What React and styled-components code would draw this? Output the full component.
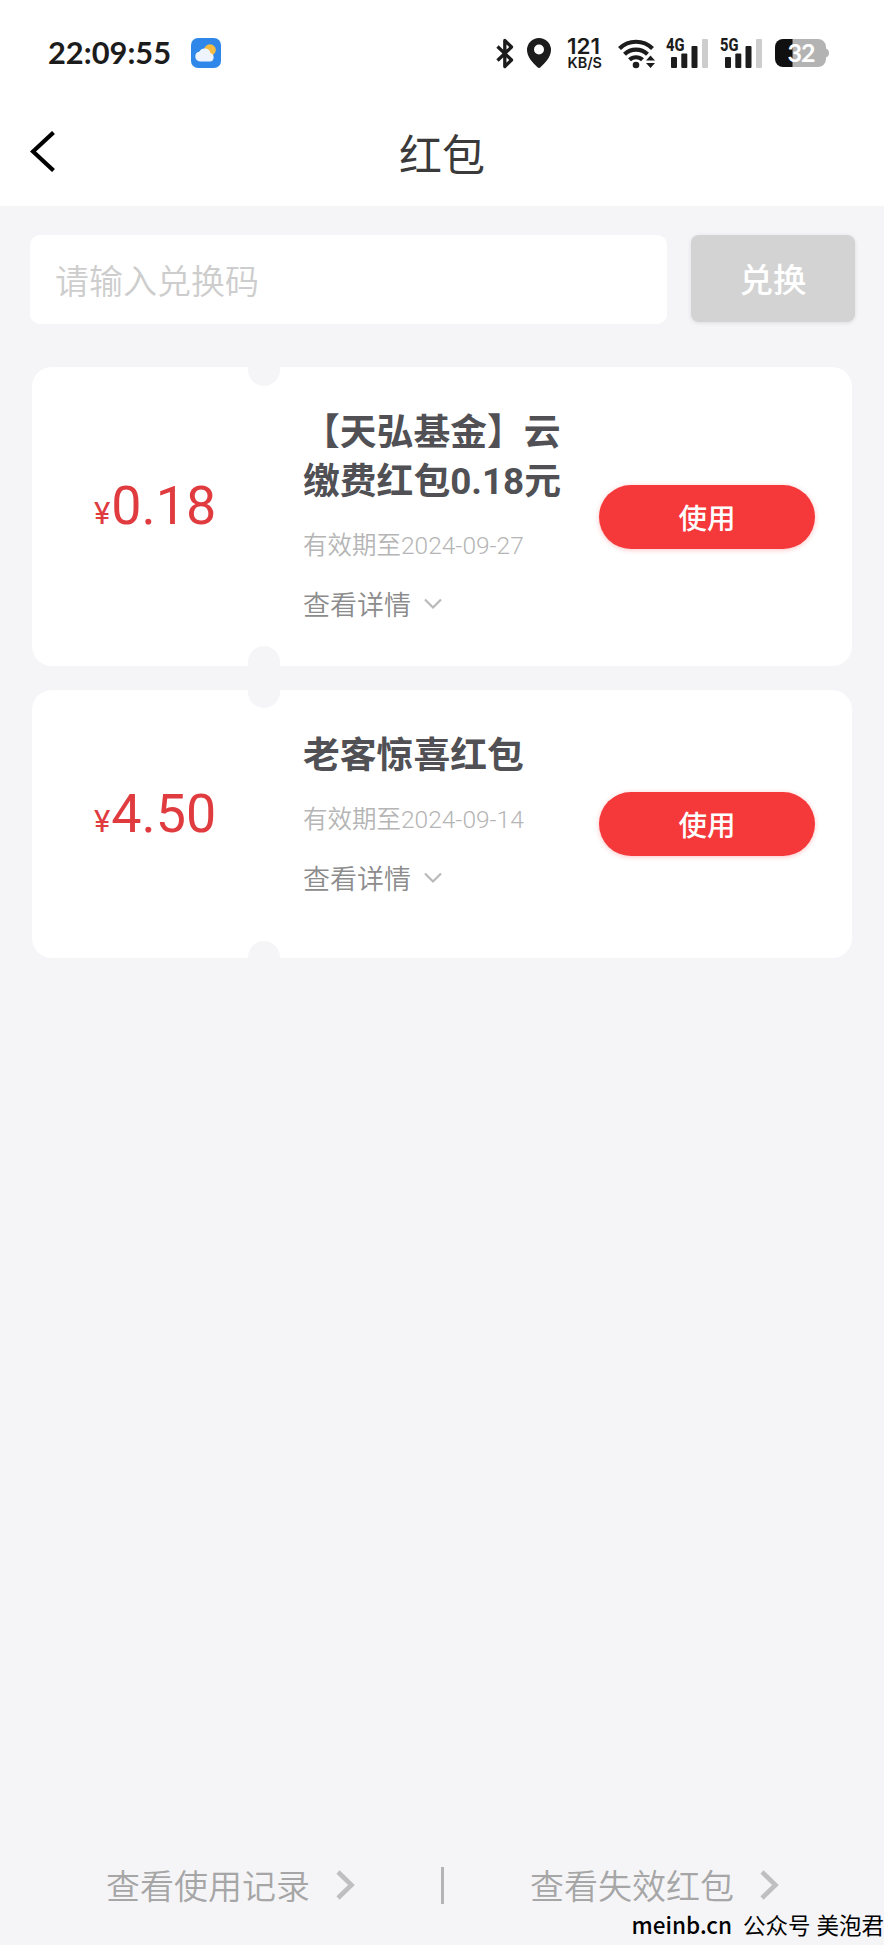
import React, { useState } from "react";
import styled, { createGlobalStyle } from "styled-components";

const GlobalStyle = createGlobalStyle`
  body {
    margin: 0;
    background: #f5f5f8;
  }
`;

const cjk = `"Noto Sans CJK SC", sans-serif`;
const mixed = `Roboto, "Noto Sans CJK SC", sans-serif`;

const Page = styled.div`
  position: relative;
  display: flex;
  flex-direction: column;
  width: 884px;
  height: 1945px;
  overflow: hidden;
  background: #f5f5f8;
  font-family: ${mixed};
`;

const StatusBar = styled.div`
  display: flex;
  align-items: center;
  box-sizing: border-box;
  height: 106px;
  padding: 0 55px 0 48px;
  background: #fff;
`;

const Clock = styled.span`
  width: 143px;
  font-family: Lato, sans-serif;
  font-weight: 700;
  font-size: 30.8px;
  line-height: 40px;
  color: #1c1c1c;
`;

const StatusIcons = styled.div`
  display: flex;
  align-items: center;
  margin-left: auto;

  svg {
    display: block;
    flex: none;
    overflow: visible;
  }
`;

const NavBar = styled.div`
  display: grid;
  grid-template-columns: 100px 1fr 100px;
  align-items: center;
  height: 100px;
  background: #fff;
`;

const BackButton = styled.button`
  display: flex;
  padding: 0 0 9px 30px;
  border: none;
  background: none;
`;

const NavTitle = styled.h1`
  margin: 0;
  font-family: ${cjk};
  font-weight: 400;
  font-size: 43px;
  line-height: 60px;
  text-align: center;
  color: #3a3a3a;
  padding-bottom: 9px;
`;

const RedeemRow = styled.form`
  display: flex;
  gap: 24px;
  padding: 29px 29px 0 30px;
`;

const CodeInput = styled.input`
  flex: 1;
  box-sizing: border-box;
  height: 89px;
  padding: 0 25px;
  border: none;
  border-radius: 10px;
  outline: none;
  background: #fff;
  font-family: ${cjk};
  font-size: 34px;
  color: #333;

  &::placeholder {
    color: #cdcdcd;
    font-weight: 350;
    opacity: 1;
  }
`;

const RedeemButton = styled.button`
  width: 164px;
  height: 87px;
  padding: 0 0 2px;
  border: none;
  border-radius: 8px;
  background: #d3d3d3;
  box-shadow: 0 1px 4px rgba(0, 0, 0, 0.1);
  font-family: ${cjk};
  font-weight: 500;
  font-size: 33.5px;
  color: #fff;
`;

const CouponList = styled.div`
  display: flex;
  flex-direction: column;
  gap: 24px;
  padding: 43px 32px 0;
`;

const Coupon = styled.div`
  position: relative;
  display: grid;
  grid-template-columns: 271px 296px 216px;
  box-sizing: border-box;
  height: ${(props) => props.$height}px;
  border-radius: 20px;
  background: #fff;
`;

const Notch = styled.span`
  position: absolute;
  ${(props) => props.$side}: ${(props) => props.$depth - 32}px;
  left: 216px;
  width: 32px;
  height: 32px;
  border-radius: 50%;
  background: #f5f5f8;
`;

const Price = styled.div`
  align-self: center;
  padding: 0 0 13px 62px;
  font-size: 53.8px;
  line-height: 64px;
  color: #e03c3f;
  white-space: nowrap;

  small {
    margin-right: 1px;
    font-size: 31px;
  }
`;

const Info = styled.div`
  padding-top: 41px;
`;

const CouponTitle = styled.h2`
  margin: 0;
  width: 262px;
  font-size: 36.8px;
  font-weight: 700;
  line-height: 49px;
  color: #505055;
`;

const Expiry = styled.p`
  margin: 22px 0 0;
  font-size: 24.5px;
  font-weight: 350;
  line-height: 36px;
  color: #b5b5b5;
`;

const DetailLink = styled.button`
  display: flex;
  align-items: center;
  gap: 13px;
  margin-top: 20px;
  padding: 0;
  border: none;
  background: none;
  font-family: ${cjk};
  font-weight: 350;
  font-size: 27px;
  line-height: 40px;
  color: #8c8c8c;
`;

const UseButton = styled.button`
  align-self: center;
  height: 64px;
  padding: 0 0 1px;
  border: none;
  border-radius: 32px;
  background: #f5383a;
  box-shadow: 0 1px 5px rgba(245, 56, 58, 0.3);
  font-family: ${cjk};
  font-weight: 500;
  font-size: 28.5px;
  color: #fff;
`;

const Footer = styled.div`
  display: flex;
  align-items: center;
  margin-top: auto;
  padding: 0 0 36px 106px;
`;

const FooterLink = styled.a`
  display: flex;
  align-items: center;
  gap: 26px;
  font-family: ${cjk};
  font-weight: 350;
  font-size: 34px;
  line-height: 48px;
  color: #a6a6a6;

  svg {
    display: block;
  }
`;

const Divider = styled.span`
  width: 3px;
  height: 37px;
  margin: 0 86px;
  background: #b4b4b4;
`;

const Watermark = styled.div`
  position: absolute;
  right: 0;
  bottom: 4px;
  display: flex;
  font-family: ${cjk};
  font-size: 22.5px;
  line-height: 34px;
  color: #000;
  white-space: nowrap;

  b {
    margin-right: 11px;
    font-weight: 500;
  }

  span {
    margin-right: 6px;
  }
`;

const WeatherIcon = () => (
  <svg width="30" height="30" viewBox="0 0 30 30">
    <rect width="30" height="30" rx="7" fill="#2f87ea" />
    <circle cx="19" cy="12" r="5.8" fill="#f7bd43" />
    <path
      d="M9 23.5a5 5 0 0 1-.6-9.900a6 6 0 0 1 11.200 1.700a4.200 4.200 0 0 1-.6 8.200z"
      fill="#eef4fd"
    />
  </svg>
);

const BluetoothIcon = () => (
  <svg width="18" height="31" viewBox="0 0 18 31">
    <path
      d="M1.500 8.500L15.500 22L8.800 28.500V2.500L15.500 9L1.500 22.500"
      fill="none"
      stroke="#1c1c1c"
      strokeWidth="3.300"
      strokeLinejoin="round"
    />
  </svg>
);

const PinIcon = () => (
  <svg width="24" height="30" viewBox="0 0 24 30" style={{ marginLeft: 13 }}>
    <path
      fillRule="evenodd"
      d="M12 0a12 12 0 0 1 12 12c0 7-6 13-10.500 17.300q-1.500 1.200-3 0C6 25 0 19 0 12A12 12 0 0 1 12 0zm0 6.500a5 5 0 1 0 0 10a5 5 0 0 0 0-10z"
      fill="#1c1c1c"
    />
  </svg>
);

const NetSpeed = () => (
  <svg width="36" height="32" viewBox="0 0 36 32" style={{ marginLeft: 16 }}>
    <g fill="#1c1c1c" fontFamily="Inter, sans-serif" fontWeight="600">
      <text x="0" y="17" fontSize="21" textLength="33" lengthAdjust="spacingAndGlyphs">
        121
      </text>
      <text x="0.500" y="31" fontSize="15" textLength="34.500" lengthAdjust="spacingAndGlyphs">
        KB/S
      </text>
    </g>
  </svg>
);

const WifiIcon = () => (
  <svg width="38" height="31" viewBox="0 0 38 31" style={{ marginLeft: 15 }}>
    <g fill="none" stroke="#1c1c1c" strokeWidth="4.200">
      <path d="M1.500 10.500a23.500 23.500 0 0 1 33 0" />
      <path d="M6.500 16.200a16.500 16.500 0 0 1 23 0" />
      <path d="M11.500 21.800a9.500 9.500 0 0 1 13 0" />
    </g>
    <circle cx="18" cy="27" r="3.300" fill="#1c1c1c" />
    <path
      d="M32.500 17.500l4.500 5h-9zM32.500 30l4.500-5h-9z"
      fill="#1c1c1c"
      stroke="#fff"
      strokeWidth="2"
      paintOrder="stroke"
    />
  </svg>
);

const Signal = ({ label, gap }) => (
  <svg width="44" height="32" viewBox="0 0 44 32" style={{ marginLeft: gap }}>
    <g fill="#1c1c1c">
      <rect x="6" y="20" width="6" height="11" rx="1" />
      <rect x="16.300" y="16.500" width="6" height="14.500" rx="1" />
      <rect x="26.500" y="9" width="6" height="22" rx="1" />
    </g>
    <rect x="37" y="2" width="6" height="29" rx="1" fill="#cdcdcd" />
    <text
      x="1"
      y="14"
      fontFamily="Roboto, sans-serif"
      fontSize="17.500"
      fontWeight="800"
      textLength="18.500"
      lengthAdjust="spacingAndGlyphs"
      fill="#1c1c1c"
      stroke="#fff"
      strokeWidth="2"
      paintOrder="stroke"
    >
      {label}
    </text>
  </svg>
);

const Battery = () => (
  <svg width="54" height="28" viewBox="0 0 54 28" style={{ marginLeft: 12 }}>
    <path
      d="M9 0H43a8 8 0 0 1 8 8v1.500q3 1 3 4.500t-3 4.500v1.500a8 8 0 0 1-8 8H9z"
      fill="#b3b3b3"
    />
    <path d="M8 0H17.500V28H8a8 8 0 0 1-8-8V8a8 8 0 0 1 8-8z" fill="#101010" />
    <text
      x="12.500"
      y="23"
      fontFamily="Lato, sans-serif"
      fontSize="25"
      fontWeight="700"
      textLength="28"
      fill="#fff"
    >
      32
    </text>
  </svg>
);

const BackIcon = () => (
  <svg width="26" height="41" viewBox="0 0 26 41">
    <path d="M23.500 1.500L3 20.500L23.500 39.500" fill="none" stroke="#000" strokeWidth="4.200" />
  </svg>
);

const DownIcon = () => (
  <svg width="18" height="12" viewBox="0 0 18 12">
    <path d="M1 1.500L9 9.500L17 1.500" fill="none" stroke="#b9b9b9" strokeWidth="2.200" />
  </svg>
);

const RightIcon = () => (
  <svg width="19" height="30" viewBox="0 0 19 30">
    <path d="M2 2L15.500 15L2 28" fill="none" stroke="#bfbfc2" strokeWidth="4.600" />
  </svg>
);

const coupons = [
  {
    amount: "0.18",
    title: "【天弘基金】云缴费红包0.18元",
    date: "2024-09-27",
    height: 299,
    notches: [19, 20],
  },
  {
    amount: "4.50",
    title: "老客惊喜红包",
    date: "2024-09-14",
    height: 268,
    notches: [18, 17],
  },
];

const App = () => {
  const [code, setCode] = useState("");

  return (
    <Page>
      <GlobalStyle />
      <StatusBar>
        <Clock>22:09:55</Clock>
        <WeatherIcon />
        <StatusIcons>
          <BluetoothIcon />
          <PinIcon />
          <NetSpeed />
          <WifiIcon />
          <Signal label="4G" gap={9} />
          <Signal label="5G" gap={10} />
          <Battery />
        </StatusIcons>
      </StatusBar>
      <NavBar>
        <BackButton>
          <BackIcon />
        </BackButton>
        <NavTitle>红包</NavTitle>
      </NavBar>

      <RedeemRow onSubmit={(e) => e.preventDefault()}>
        <CodeInput
          placeholder="请输入兑换码"
          value={code}
          onChange={(e) => setCode(e.target.value)}
        />
        <RedeemButton>兑换</RedeemButton>
      </RedeemRow>

      <CouponList>
        {coupons.map((coupon) => (
          <Coupon key={coupon.title} $height={coupon.height}>
            <Notch $side="top" $depth={coupon.notches[0]} />
            <Notch $side="bottom" $depth={coupon.notches[1]} />
            <Price>
              <small>¥</small>
              {coupon.amount}
            </Price>
            <Info>
              <CouponTitle>{coupon.title}</CouponTitle>
              <Expiry>有效期至{coupon.date}</Expiry>
              <DetailLink>
                查看详情
                <DownIcon />
              </DetailLink>
            </Info>
            <UseButton>使用</UseButton>
          </Coupon>
        ))}
      </CouponList>

      <Footer>
        <FooterLink>
          查看使用记录
          <RightIcon />
        </FooterLink>
        <Divider />
        <FooterLink>
          查看失效红包
          <RightIcon />
        </FooterLink>
      </Footer>
      <Watermark>
        <b>meinb.cn</b>
        <span>公众号</span>
        美泡君
      </Watermark>
    </Page>
  );
};

export default App;
